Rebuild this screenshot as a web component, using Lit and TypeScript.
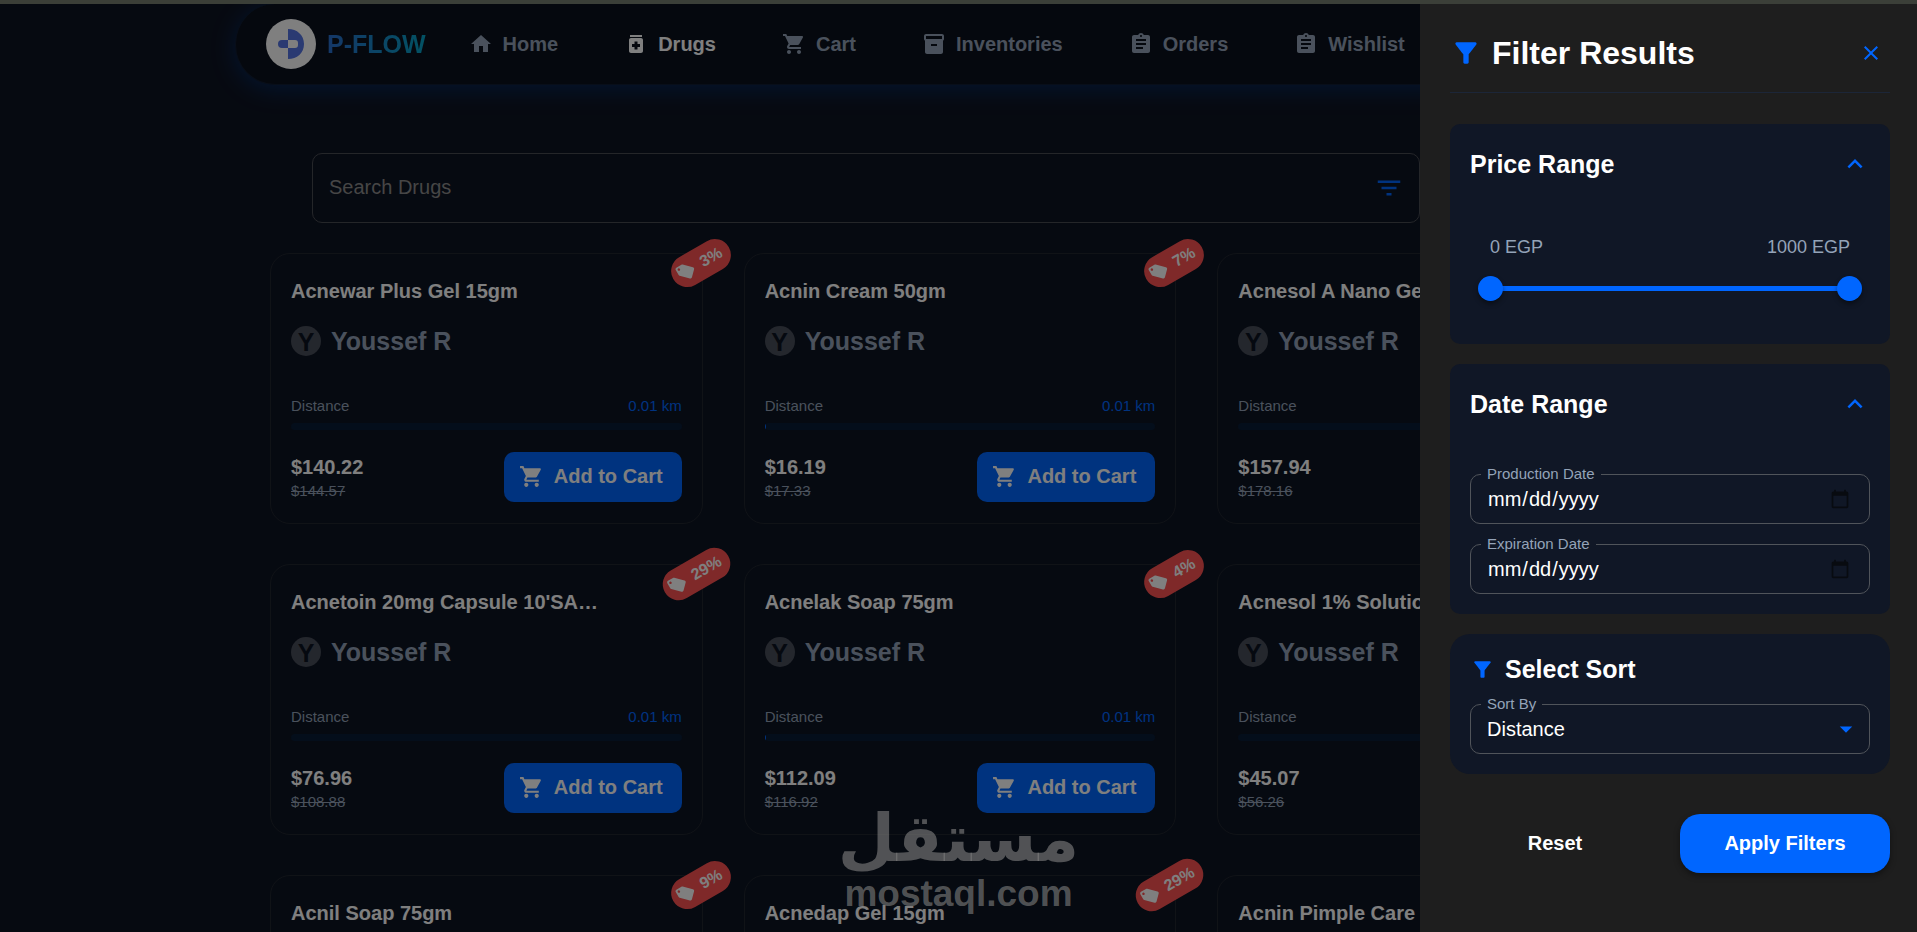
import { LitElement, html, css, svg } from "lit";
import { customElement, property } from "lit/decorators.js";

const ICONS: Record<string, string> = {
  home: "M10 20v-6h4v6h5v-8h3L12 3 2 12h3v8z",
  drugs:
    "M6 3h12v2H6zm11 3H7c-1.1 0-2 .9-2 2v11c0 1.1.9 2 2 2h10c1.1 0 2-.9 2-2V8c0-1.1-.9-2-2-2zm-1 9h-2.5v2.5h-3V15H8v-3h2.5V9.5h3V12H16v3z",
  cart:
    "M7 18c-1.1 0-1.99.9-1.99 2S5.9 22 7 22s2-.9 2-2-.9-2-2-2zM1 2v2h2l3.6 7.59-1.35 2.45c-.16.28-.25.61-.25.96 0 1.1.9 2 2 2h12v-2H7.42c-.14 0-.25-.11-.25-.25l.03-.12.9-1.63h7.45c.75 0 1.41-.41 1.75-1.03l3.58-6.49c.08-.14.12-.31.12-.48 0-.55-.45-1-1-1H5.21l-.94-2H1zm16 16c-1.1 0-1.99.9-1.99 2s.89 2 1.99 2 2-.9 2-2-.9-2-2-2z",
  inventory:
    "M20 2H4c-1 0-2 .9-2 2v3.01c0 .72.43 1.34 1 1.69V20c0 1.1 1.1 2 2 2h14c.9 0 2-.9 2-2V8.7c.57-.35 1-.97 1-1.69V4c0-1.1-1-2-2-2zm-5 12H9v-2h6v2zm5-7H4V4h16v3z",
  assignment:
    "M19 3h-4.18C14.4 1.84 13.3 1 12 1c-1.3 0-2.4.84-2.82 2H5c-1.1 0-2 .9-2 2v14c0 1.1.9 2 2 2h14c1.1 0 2-.9 2-2V5c0-1.1-.9-2-2-2zm-7 0c.55 0 1 .45 1 1s-.45 1-1 1-1-.45-1-1 .45-1 1-1zm2 14H7v-2h7v2zm3-4H7v-2h10v2zm0-4H7V7h10v2z",
  lines: "M10 18h4v-2h-4v2zM3 6v2h18V6H3zm3 7h12v-2H6v2z",
  tag:
    "M21.41 11.58l-9-9C12.05 2.22 11.55 2 11 2H4c-1.1 0-2 .9-2 2v7c0 .55.22 1.05.59 1.42l9 9c.36.36.86.58 1.41.58s1.05-.22 1.41-.59l7-7c.37-.36.59-.86.59-1.41s-.23-1.06-.59-1.42zM5.5 7C4.67 7 4 6.33 4 5.5S4.67 4 5.5 4 7 4.67 7 5.5 6.33 7 5.5 7z",
  funnel:
    "M4.25 5.61C6.27 8.2 10 13 10 13v6c0 .55.45 1 1 1h2c.55 0 1-.45 1-1v-6s3.72-4.8 5.74-7.39c.51-.66.04-1.61-.79-1.61H5.04c-.83 0-1.3.95-.79 1.61z",
  close:
    "M19 6.41L17.59 5 12 10.59 6.41 5 5 6.41 10.59 12 5 17.59 6.41 19 12 13.41 17.59 19 19 17.59 13.41 12z",
  up: "M12 8l-6 6 1.41 1.41L12 10.83l4.59 4.58L18 14z",
  down: "M7 10l5 5 5-5z",
};

const icon = (name: string, size: number) => html`<svg
  width=${size}
  height=${size}
  viewBox="0 0 24 24"
  fill="currentColor"
  aria-hidden="true"
>
  ${svg`<path d=${ICONS[name]}></path>`}
</svg>`;

const shared = css`
  * {
    box-sizing: border-box;
  }
  h1,
  h2,
  h3,
  p {
    margin: 0;
  }
  svg {
    display: block;
    flex: none;
  }
  button,
  input,
  select {
    font: inherit;
    color: inherit;
    margin: 0;
  }
  button {
    border: 0;
    padding: 0;
    background: none;
    cursor: pointer;
  }
`;

interface Drug {
  name: string;
  price: string;
  old: string;
  off: string;
  reach?: number;
}

const DRUGS: Drug[] = [
  { name: "Acnewar Plus Gel 15gm", price: "$140.22", old: "$144.57", off: "3%" },
  { name: "Acnin Cream 50gm", price: "$16.19", old: "$17.33", off: "7%", reach: 0.3 },
  { name: "Acnesol A Nano Gel 15gm", price: "$157.94", old: "$178.16", off: "11%" },
  { name: "Acnetoin 20mg Capsule 10'SA…", price: "$76.96", old: "$108.88", off: "29%" },
  { name: "Acnelak Soap 75gm", price: "$112.09", old: "$116.92", off: "4%", reach: 0.3 },
  { name: "Acnesol 1% Solution 25ml", price: "$45.07", old: "$56.26", off: "20%" },
  { name: "Acnil Soap 75gm", price: "$88.40", old: "$97.14", off: "9%" },
  { name: "Acnedap Gel 15gm", price: "$61.30", old: "$86.34", off: "29%" },
  { name: "Acnin Pimple Care", price: "$52.75", old: "$60.63", off: "13%" },
];

@customElement("drug-card")
export class DrugCard extends LitElement {
  @property({ attribute: false }) drug!: Drug;

  static styles = [
    shared,
    css`
      :host {
        display: block;
        min-width: 0;
      }
      .card {
        position: relative;
        border: 1px solid #20262f;
        border-radius: 20px;
        padding: 21px 20px 20px;
      }
      .name {
        font-size: 20px;
        line-height: 32px;
        color: #fff;
        white-space: nowrap;
        overflow: hidden;
        text-overflow: ellipsis;
      }
      .seller {
        display: flex;
        align-items: center;
        gap: 10px;
        margin-top: 18px;
        font-size: 25px;
        line-height: 32px;
        font-weight: 700;
        color: #94a3b8;
      }
      .avatar {
        display: grid;
        place-items: center;
        width: 30px;
        height: 30px;
        border-radius: 50%;
        background: #484e5a;
        color: #0b1220;
      }
      .distance {
        display: flex;
        justify-content: space-between;
        margin-top: 37px;
        font-size: 15px;
        line-height: 24px;
        color: #94a3b8;
      }
      .km {
        color: #0066ff;
      }
      .bar {
        display: block;
        height: 7px;
        margin-top: 5px;
        border-radius: 4px;
        background: #081c36;
        overflow: hidden;
      }
      .fill {
        display: block;
        height: 100%;
        background: #0066ff;
      }
      .foot {
        display: flex;
        justify-content: space-between;
        align-items: flex-start;
        margin-top: 22px;
      }
      .price {
        padding-top: 3px;
        font-size: 20px;
        line-height: 24px;
        font-weight: 700;
        color: #fff;
      }
      .old {
        display: block;
        font-size: 15px;
        line-height: 24px;
        font-weight: 400;
        color: #94a3b8;
      }
      .add {
        display: flex;
        align-items: center;
        gap: 10px;
        height: 50px;
        padding: 0 19px 2px 15px;
        border-radius: 10px;
        background: #0066ff;
        color: #fff;
        font-size: 20px;
        font-weight: 700;
      }
      .badge {
        position: absolute;
        top: -7px;
        right: -31px;
        display: flex;
        align-items: center;
        gap: 7px;
        height: 32px;
        padding: 0 9px 0 5px;
        border-radius: 16px;
        background: #ff5252;
        color: #fff;
        font-size: 16px;
        font-weight: 700;
        transform: rotate(-30deg);
      }
    `,
  ];

  render() {
    const d = this.drug;
    return html`<article class="card">
      <span class="badge">${icon("tag", 20)}${d.off}</span>
      <h3 class="name">${d.name}</h3>
      <div class="seller"><span class="avatar">Y</span>Youssef R</div>
      <div class="distance"><span>Distance</span><span class="km">0.01 km</span></div>
      <span class="bar"><span class="fill" style="width:${d.reach ?? 0}%"></span></span>
      <div class="foot">
        <div class="price">${d.price}<s class="old">${d.old}</s></div>
        <button class="add" type="button">${icon("cart", 25)}Add to Cart</button>
      </div>
    </article>`;
  }
}

@customElement("filter-drawer")
export class FilterDrawer extends LitElement {
  static styles = [
    shared,
    css`
      :host {
        display: block;
        width: 497px;
        max-width: 100%;
        padding: 25px 27px 25px 30px;
        background: #1e1e1e;
        color: #fff;
        overflow: auto;
      }
      form {
        display: flex;
        flex-direction: column;
        gap: 20px;
      }
      .head {
        display: flex;
        align-items: center;
        gap: 10px;
        height: 64px;
        padding: 0 7px 15px 0;
        margin-bottom: 11px;
        border-bottom: 1px solid #1c2638;
        color: #0066ff;
      }
      .title {
        flex: 1;
        font-size: 32px;
        line-height: 40px;
        color: #fff;
      }
      .panel {
        border-radius: 10px;
        background: #101726;
        padding: 20px;
      }
      .round {
        border-radius: 20px;
        padding-top: 17px;
      }
      .toggle {
        display: flex;
        align-items: center;
        justify-content: space-between;
        width: 100%;
        font-size: 25px;
        line-height: 40px;
        font-weight: 700;
      }
      .toggle svg {
        color: #0066ff;
      }
      .range {
        padding: 51px 20px 7px;
      }
      .ends {
        display: flex;
        justify-content: space-between;
        font-size: 18px;
        line-height: 24px;
        color: #94a3b8;
      }
      .track {
        display: grid;
        align-items: center;
        height: 25px;
        margin: 17px -12px 16px;
        background: linear-gradient(#0066ff, #0066ff) center / calc(100% - 25px) 5px no-repeat;
      }
      .track input {
        grid-area: 1 / 1;
        width: 100%;
        height: 25px;
        appearance: none;
        background: none;
        pointer-events: none;
      }
      .track input::-webkit-slider-thumb {
        appearance: none;
        width: 25px;
        height: 25px;
        border-radius: 50%;
        background: #0066ff;
        box-shadow: 0 3px 5px rgba(0, 0, 0, 0.4);
        pointer-events: auto;
      }
      .dates {
        display: flex;
        flex-direction: column;
        gap: 20px;
        margin-top: 50px;
      }
      fieldset {
        position: relative;
        min-width: 0;
        height: 61px;
        margin: -11px 0 0;
        padding: 0 16px;
        border: 1px solid #50545a;
        border-radius: 10px;
      }
      legend {
        padding: 0 6px;
        margin-left: -6px;
        font-size: 15px;
        line-height: 22px;
        color: #94a3b8;
      }
      .control {
        display: block;
        width: 100%;
        height: 30px;
        margin-top: -1px;
        padding: 0;
        border: 0;
        outline: 0;
        background: none;
        color: #fff;
        font-size: 20px;
        line-height: 30px;
      }
      .control::-webkit-calendar-picker-indicator {
        width: 20px;
        height: 20px;
        margin-right: 3px;
        padding: 0;
        background: url("data:image/svg+xml,%3Csvg xmlns='http://www.w3.org/2000/svg' viewBox='0 0 24 24'%3E%3Cpath fill='%23080b10' d='M20 3h-1V1h-2v2H7V1H5v2H4c-1.1 0-2 .9-2 2v16c0 1.1.9 2 2 2h16c1.1 0 2-.9 2-2V5c0-1.1-.9-2-2-2zm0 18H4V8h16v13z'/%3E%3C/svg%3E")
          center / 20px 20px no-repeat;
      }
      select.control {
        appearance: none;
      }
      option {
        color: #000;
      }
      .caret {
        position: absolute;
        right: 8px;
        bottom: 9px;
        color: #0066ff;
        pointer-events: none;
      }
      .sort {
        display: flex;
        align-items: center;
        gap: 10px;
        margin-bottom: 17px;
        font-size: 25px;
        line-height: 36px;
      }
      .sort svg {
        color: #0066ff;
      }
      .actions {
        display: grid;
        grid-template-columns: 1fr 1fr;
        gap: 20px;
        margin-top: 20px;
      }
      .action {
        height: 59px;
        border-radius: 20px;
        font-size: 20px;
        font-weight: 700;
      }
      .apply {
        background: #0066ff;
        box-shadow: 0 3px 6px rgba(0, 0, 0, 0.4);
      }
    `,
  ];

  private dateField(label: string, id: string) {
    return html`<fieldset>
      <legend><label for=${id}>${label}</label></legend>
      <input class="control" id=${id} type="date" />
    </fieldset>`;
  }

  render() {
    return html`<form @submit=${(e: Event) => e.preventDefault()}>
      <header class="head">
        ${icon("funnel", 32)}
        <h2 class="title">Filter Results</h2>
        <button type="button" aria-label="Close">${icon("close", 24)}</button>
      </header>
      <section class="panel">
        <button class="toggle" type="button" aria-expanded="true">Price Range${icon("up", 30)}</button>
        <div class="range">
          <div class="ends"><span>0 EGP</span><span>1000 EGP</span></div>
          <div class="track">
            <input type="range" min="0" max="1000" .value=${"0"} aria-label="Minimum price" />
            <input type="range" min="0" max="1000" .value=${"1000"} aria-label="Maximum price" />
          </div>
        </div>
      </section>
      <section class="panel">
        <button class="toggle" type="button" aria-expanded="true">Date Range${icon("up", 30)}</button>
        <div class="dates">
          ${this.dateField("Production Date", "production")}
          ${this.dateField("Expiration Date", "expiration")}
        </div>
      </section>
      <section class="panel round">
        <h3 class="sort">${icon("funnel", 25)}Select Sort</h3>
        <fieldset>
          <legend><label for="sort">Sort By</label></legend>
          <select class="control" id="sort">
            <option>Distance</option>
          </select>
          <span class="caret">${icon("down", 30)}</span>
        </fieldset>
      </section>
      <div class="actions">
        <button class="action" type="reset">Reset</button>
        <button class="action apply" type="submit">Apply Filters</button>
      </div>
    </form>`;
  }
}

const NAV = [
  { label: "Home", glyph: "home" },
  { label: "Drugs", glyph: "drugs", active: true },
  { label: "Cart", glyph: "cart" },
  { label: "Inventories", glyph: "inventory" },
  { label: "Orders", glyph: "assignment" },
  { label: "Wishlist", glyph: "assignment" },
];

@customElement("app-root")
export class AppRoot extends LitElement {
  static styles = [
    shared,
    css`
      :host {
        position: relative;
        display: block;
        height: 100vh;
        overflow: hidden;
        border-top: 4px solid #3b3f38;
        background: #0d1422;
        font-family: "Liberation Sans", Arial, sans-serif;
        color: #fff;
      }
      .nav {
        display: flex;
        align-items: center;
        gap: 43px;
        height: 81px;
        max-width: 1448px;
        margin-left: 235px;
        padding: 0 30px;
        border: 1px solid #111d33;
        border-top: 0;
        border-radius: 40px;
        background: #0b111d;
        box-shadow: 0 4px 24px rgba(0, 102, 255, 0.28);
      }
      .brand {
        display: flex;
        align-items: center;
        gap: 11px;
        font-size: 25px;
        font-weight: 700;
        text-decoration: none;
      }
      .brand-name {
        background: linear-gradient(90deg, #2a6fd0, #06a4c8);
        background-clip: text;
        color: transparent;
      }
      .links {
        display: flex;
        gap: 66px;
      }
      .link {
        display: flex;
        align-items: center;
        gap: 10px;
        font-size: 20px;
        font-weight: 700;
        color: #94a3b8;
        text-decoration: none;
      }
      .active {
        color: #fff;
      }
      .search {
        display: flex;
        align-items: center;
        max-width: 1108px;
        height: 70px;
        margin: 68px 0 30px 312px;
        padding: 0 15px 0 16px;
        border: 1px solid #494c53;
        border-radius: 10px;
      }
      .search input {
        flex: 1;
        min-width: 0;
        height: 24px;
        border: 0;
        padding: 0 0 2px;
        outline: 0;
        background: none;
        font-size: 20px;
      }
      .search input::placeholder {
        color: #8c8c8c;
      }
      .search button {
        color: #0066ff;
      }
      .grid {
        display: grid;
        grid-template-columns: repeat(3, minmax(0, 1fr));
        gap: 40px 41px;
        max-width: 1380px;
        margin-left: 270px;
      }
      .scrim {
        position: absolute;
        inset: 0;
        background: rgba(0, 0, 0, 0.5);
      }
      filter-drawer {
        position: absolute;
        inset: 0 0 0 auto;
      }
      .watermark {
        position: absolute;
        left: 50%;
        bottom: 20px;
        transform: translateX(-50%);
        color: rgba(128, 128, 128, 0.62);
        text-align: center;
        font-weight: 700;
        pointer-events: none;
      }
      .arabic {
        display: block;
        font-family: "DejaVu Sans", sans-serif;
        font-size: 66px;
        line-height: 66px;
      }
      .latin {
        display: block;
        font-size: 37px;
        line-height: 44px;
      }
    `,
  ];

  render() {
    return html`
      <nav class="nav" aria-label="Main">
        <a class="brand" href="#">
          <svg width="50" height="50" viewBox="0 0 50 50" aria-hidden="true">
            <circle cx="25" cy="25" r="25" fill="#fff" />
            <path d="M22 10c9 0 16 6 16 15s-7 15-16 15V29h7a3 3 0 0 0 3-3v-2a3 3 0 0 0-3-3h-7z" fill="#5474e4" />
            <path d="M22 21v8h-6a4 4 0 0 1 0-8z" fill="#5474e4" />
          </svg>
          <span class="brand-name">P-FLOW</span>
        </a>
        <div class="links">
          ${NAV.map(
            (n) => html`<a class="link ${n.active ? "active" : ""}" href="#">${icon(n.glyph, 24)}${n.label}</a>`
          )}
        </div>
      </nav>
      <div class="search">
        <input type="search" placeholder="Search Drugs" aria-label="Search Drugs" />
        <button type="button" aria-label="Filter">${icon("lines", 30)}</button>
      </div>
      <main class="grid">${DRUGS.map((d) => html`<drug-card .drug=${d}></drug-card>`)}</main>
      <div class="scrim"></div>
      <filter-drawer role="dialog" aria-label="Filter Results"></filter-drawer>
      <div class="watermark">
        <span class="arabic" lang="ar" dir="rtl">مستقل</span>
        <span class="latin">mostaql.com</span>
      </div>
    `;
  }
}
